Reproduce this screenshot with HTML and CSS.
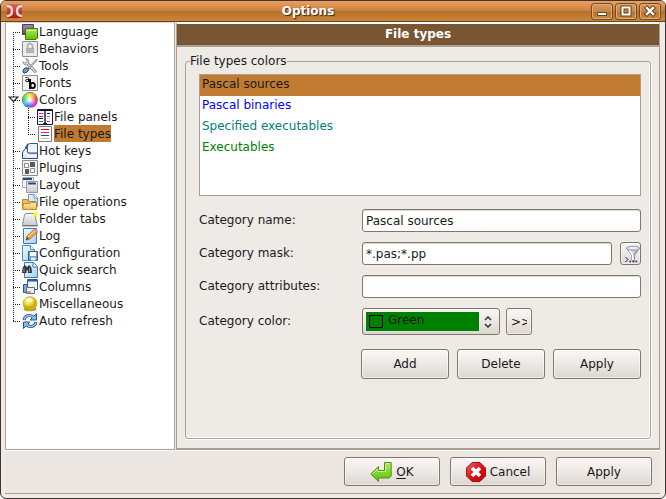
FILE: index.html
```html
<!DOCTYPE html>
<html lang="en">
<head>
<meta charset="utf-8">
<title>Options</title>
<link rel="stylesheet" href="styles.css">
</head>
<body>
<svg class="defs" aria-hidden="true">
  <defs>
    <linearGradient id="green" x2="0" y2="1"><stop stop-color="#b0ec5c"/><stop offset="1" stop-color="#5fbc06"/></linearGradient>
    <linearGradient id="lilac" x2="0" y2="1"><stop stop-color="#a58aae"/><stop offset="1" stop-color="#64466c"/></linearGradient>
    <linearGradient id="paper" x2="1" y2="1"><stop stop-color="#f4faff"/><stop offset="1" stop-color="#a6cdf5"/></linearGradient>
    <linearGradient id="steel" x2="0" y2="1"><stop stop-color="#f7f7f8"/><stop offset="1" stop-color="#c7c8cc"/></linearGradient>
    <linearGradient id="folder" x2="0" y2="1"><stop stop-color="#fff0b4"/><stop offset="1" stop-color="#eeb64c"/></linearGradient>
    <radialGradient id="gold" cx=".4" cy=".3"><stop stop-color="#fffbb0"/><stop offset=".6" stop-color="#eddb36"/><stop offset="1" stop-color="#c9b115"/></radialGradient>
    <linearGradient id="red" x2="1" y2="1"><stop stop-color="#e8686a"/><stop offset=".5" stop-color="#d41418"/><stop offset="1" stop-color="#c00000"/></linearGradient>
    <linearGradient id="brick" x2="0" y2="1"><stop stop-color="#d9695a"/><stop offset="1" stop-color="#b5120c"/></linearGradient>
  </defs>
</svg>
<div class="window">
  <header class="titlebar">
    <svg class="logo" width="17" height="14" viewBox="0 0 17 14"><rect x="1" width="15" height="14" rx="1" fill="url(#brick)"/><path d="M1 2C4.500 2 6 4 6 7S4.500 12 1 12M16 2C12.500 2 11 4 11 7s1.500 5 5 5" fill="none" stroke="#e3dcda" stroke-width="2.400"/></svg>
    <h1>Options</h1>
    <div class="controls">
      <button aria-label="Minimize"><svg width="14" height="14" viewBox="0 0 14 14"><path d="M2.500 8.500h9v3h-9z" fill="#fff" stroke="#6b4217"/></svg></button>
      <button aria-label="Maximize"><svg width="14" height="14" viewBox="0 0 14 14"><path d="M3.500 3.500h7v7h-7z" fill="none" stroke="#6b4217" stroke-width="4"/><path d="M3.500 3.500h7v7h-7z" fill="none" stroke="#fff" stroke-width="2"/></svg></button>
      <button aria-label="Close"><svg width="14" height="14" viewBox="0 0 14 14"><path d="M4 4l6 6m0-6l-6 6" stroke="#6b4217" stroke-width="4.400" stroke-linecap="square"/><path d="M4 4l6 6m0-6l-6 6" stroke="#fff" stroke-width="2.400" stroke-linecap="square"/></svg></button>
    </div>
  </header>
  <div class="frame">
    <main class="body">
      <nav class="sidebar">
        <ul class="tree">
          <li><a class="node" href="#"><svg class="icon" viewBox="0 0 16 16"><path d="M.5.500h11v10H.500z" fill="url(#lilac)" stroke="#553a5e"/><path d="M3.500 5.500l1.500-1h10.500v9.500l-1.500 1.500H3.500z" fill="url(#green)" stroke="#3d7d08"/><path d="M4.500 6.500h9" stroke="#d2f79c"/></svg><span>Language</span></a></li>
          <li><a class="node" href="#"><svg class="icon" viewBox="0 0 16 16"><path d="M.5.500h15v15H.500z" fill="#ececec" stroke="#8d8d8d"/><path d="M5.500 7V5a2.500 2.500 0 0 1 5 0v2" fill="none" stroke="#a9a9a9" stroke-width="1.500"/><path d="M4 7h8v5H4z" fill="#aaa"/><path d="M4 8.500h8M4 10.500h8" stroke="#bcbcbc"/></svg><span>Behaviors</span></a></li>
          <li><a class="node" href="#"><svg class="icon" viewBox="0 0 16 16"><path d="M5 5l9 9.500" stroke="#777" stroke-width="3"/><path d="M5 5l9 9.500" stroke="#dcdcdc" stroke-width="1.500"/><path d="M1 3.500L2.500 5 5 4.500 5 2 3.500.800Q7 .500 7 4 6.500 7.500 3 6.800 1 6 1 3.500z" fill="#ddd" stroke="#888" stroke-width=".8"/><path d="M6 10l7.500-8L15 1l-.5 2L7 11z" fill="#ddd" stroke="#777" stroke-width=".8"/><path d="M.800 13.500Q1 10.500 4 9.500L7 11Q6 15 2 15.300z" fill="#6d94c2" stroke="#254a78"/></svg><span>Tools</span></a></li>
          <li><a class="node" href="#"><svg class="icon" viewBox="0 0 16 16"><path d="M.5.500h15v15H.500z" fill="#f3f3f3" stroke="#8d8d8d"/><path d="M3.500 2.500h2q1 0 1 1V7M6.500 4.600H5q-1.500 0-1.500 1T5 6.600h1.500" fill="none" stroke="#222"/><path d="M8 4v10" stroke="#000" stroke-width="2"/><ellipse cx="10.700" cy="10.500" rx="2.200" ry="2.600" fill="none" stroke="#000" stroke-width="1.800"/></svg><span>Fonts</span></a></li>
          <li>
            <a class="node expanded" href="#"><svg class="twisty" width="11" height="7" viewBox="0 0 11 7"><path d="M1 1h9L5.500 5.500z" fill="#fff" stroke="#222" stroke-width="1.200"/></svg><i class="wheel"></i><span>Colors</span></a>
            <ul class="branch">
              <li><a class="node" href="#"><svg class="icon" viewBox="0 0 16 16"><path d="M.5.500h15v15H.500z" fill="#fff" stroke="#14143c"/><path d="M0 1.500h16" stroke="#14143c"/><path d="M8 1v14" stroke="#14143c" stroke-width="1.400"/><path d="M6 15h4" stroke="#14143c" stroke-width="2"/><path d="M2 4.500h4" stroke="#f0f"/><path d="M2 7.500h4" stroke="red"/><path d="M2 9.500h4M10 4.500h3" stroke="#00f"/><path d="M2 12.500h4" stroke="#0a0"/><path d="M10 7.500h3" stroke="#0bd"/><path d="M10 9.500h3" stroke="#ee0"/><path d="M10 12.500h3" stroke="#f0f"/></svg><span>File panels</span></a></li>
              <li><a class="node selected" href="#" aria-current="page"><svg class="icon" viewBox="0 0 16 16"><path d="M1.500.500h13v15h-13z" fill="#fff" stroke="#777"/><path d="M4 3.500h8" stroke="red"/><path d="M4 6.500h8" stroke="#f0f"/><path d="M4 9.500h8" stroke="green"/><path d="M4 12.500h8" stroke="#bbb"/></svg><span>File types</span></a></li>
            </ul>
          </li>
          <li><a class="node" href="#"><svg class="icon" viewBox="0 0 16 16"><path d="M.5 15.500V9L3.500 5.500H6V10h9.500v5.500z" fill="#e2e6ec" stroke="#23508d"/><path d="M5.500 2.500Q6 .500 8 .500h7.500v9.500H7Q4.500 10 5.500 7z" fill="#f1f2f4" stroke="#345c92"/><path d="M3.500 5.500L6 .8" stroke="#2e5a96" stroke-width="1.600"/><path d="M1.500 10.500H5l1.500 2.500H14" fill="none" stroke="#fff" stroke-width="1.500"/></svg><span>Hot keys</span></a></li>
          <li><a class="node" href="#"><svg class="icon" viewBox="0 0 16 16"><path d="M.5.500h15v15H.500z" fill="#f2f2f2" stroke="#8d8d8d"/><path d="M2.500 3.500h4v4h-4zM8.500 8.500h4v4h-4z" fill="#fff" stroke="#888"/><path d="M8 2h5v5H8zM3 9h4v5H3z" fill="#555c5f"/></svg><span>Plugins</span></a></li>
          <li><a class="node" href="#"><svg class="icon" viewBox="0 0 16 16"><path d="M.5.500h11v10H.500z" fill="#f3f3f3" stroke="#aaa"/><path d="M1 2h9" stroke="#244b86" stroke-width="2"/><path d="M4.500 4.500h11v11h-11z" fill="url(#steel)" stroke="#999"/><path d="M6 6.500h8" stroke="#244b86" stroke-width="2"/></svg><span>Layout</span></a></li>
          <li><a class="node" href="#"><svg class="icon" viewBox="0 0 16 16"><path d="M6.500.500h6l3 3v9h-9z" fill="url(#paper)" stroke="#6798d1"/><path d="M12 .500v3.500h3.500" fill="#fff" stroke="#6798d1"/><path d="M.5 14.500V5.500h5l1 2h7v7z" fill="#eec064" stroke="#bd8527"/><path d="M.5 15.500l1-6H8l1.500-1h5v7z" fill="url(#folder)" stroke="#c58b2b"/></svg><span>File operations</span></a></li>
          <li><a class="node" href="#"><svg class="icon" viewBox="0 0 16 16"><path d="M.5 13.500L2.500 4l1-1.500h8L13 4l2 9.500v1.500H.500z" fill="url(#steel)" stroke="#888"/><path d="M0 14.500h16" stroke="#777"/><path d="M11 1l2 .8L14.500 0l.5 2 1 1.500-1 1 .5 2-2-1-2 .5.300-2z" fill="#fff51f"/></svg><span>Folder tabs</span></a></li>
          <li><a class="node" href="#"><svg class="icon" viewBox="0 0 16 16"><path d="M1.500.500h13v15h-13z" fill="url(#paper)" stroke="#3c78c4"/><path d="M4 12l1-4 7-6.500L15.500 4 8 11z" fill="#f3a93a" stroke="#8b641e" stroke-width=".7"/><path d="M6 8.500l7-6" stroke="#ffe4a0"/><path d="M12 1.500l1.500-1L16 3l-1 1.500z" fill="#e58d91"/><path d="M4 12l1-3 2 2z" fill="#444"/></svg><span>Log</span></a></li>
          <li><a class="node" href="#"><svg class="icon" viewBox="0 0 16 16"><path d="M.5.500h8l4 4v11H.500z" fill="url(#paper)" stroke="#4f88cc"/><path d="M8.500.500v4h4" fill="#fff" stroke="#4f88cc"/><path d="M6.500 6.500h9v9h-9z" fill="#719fd6" stroke="#315e9b"/><path d="M8 7h6v4H8z" fill="#fff"/><path d="M9 12.500h4.500v3H9z" fill="#e5edf6"/></svg><span>Configuration</span></a></li>
          <li><a class="node" href="#"><svg class="icon" viewBox="0 0 16 16"><path d="M2.500.500h9l4 4v11h-13z" fill="url(#paper)" stroke="#3c78c4"/><path d="M11 .500v4.500h4.500" fill="#fff" stroke="#3c78c4"/><path d="M0 11l.5-5L2 3.500h2l.5 1.500H5.500L6 3.500h2L9.500 6l.5 5H6V8.500H4.500V11z" fill="#303840"/><path d="M2 6v4m5.500-4v4" stroke="#89939b"/></svg><span>Quick search</span></a></li>
          <li><a class="node" href="#"><svg class="icon" viewBox="0 0 16 16"><path d="M5.500.500h10v10h-10z" fill="#edf3fb" stroke="#35568e"/><path d="M6 1.500h9" stroke="#315a9c" stroke-width="2"/><path d="M1.500 5.500h4v8h-4z" fill="#79a7dd" stroke="#28558e"/><path d="M4.500 8.500h8v6h-8z" fill="#eee" stroke="#6c6680"/><path d="M5 12h4v2H5z" fill="#c99"/></svg><span>Columns</span></a></li>
          <li><a class="node" href="#"><svg class="icon" viewBox="0 0 16 16"><ellipse cx="8" cy="13" rx="6.500" ry="2.300" fill="#b5a336"/><circle cx="8" cy="7.500" r="6.800" fill="url(#gold)" stroke="#b9a317" stroke-width=".8"/><ellipse cx="7" cy="4" rx="3.500" ry="2" fill="#fffde0" opacity=".8"/><path d="M3 10.500h10" stroke="#c4ad1f"/></svg><span>Miscellaneous</span></a></li>
          <li><a class="node" href="#"><svg class="icon" viewBox="0 0 16 16"><path d="M2 7Q3 2.500 7.500 2.500q2.500 0 4 2M14 9q-1 4.500-5.500 4.500-2.500 0-4-2" fill="none" stroke="#255892" stroke-width="3.200"/><path d="M14.500.500v6.500H8zM1.500 15.500V9H8z" fill="#8db8e5" stroke="#255892"/><path d="M2 6.500Q3.500 2.500 7.500 2.500q2.500 0 4.500 2.500M14 9.500q-1.500 4-5.500 4-2.500 0-4.500-2.500" fill="none" stroke="#9fc4ea" stroke-width="1.400"/></svg><span>Auto refresh</span></a></li>
        </ul>
      </nav>
      <section class="page">
        <h2>File types</h2>
        <fieldset class="group">
          <legend>File types colors</legend>
          <ul class="types" role="listbox" aria-label="File types colors">
            <li class="current" role="option" aria-selected="true">Pascal sources</li>
            <li class="blue" role="option">Pascal binaries</li>
            <li class="teal" role="option">Specified executables</li>
            <li class="green" role="option">Executables</li>
          </ul>
          <div class="form">
            <label for="name">Category name:</label>
            <input id="name" type="text" value="Pascal sources">
            <label for="mask">Category mask:</label>
            <div class="with-button">
              <input id="mask" type="text" value="*.pas;*.pp">
              <button class="push filter" aria-label="Choose mask"><svg width="18" height="20" viewBox="0 0 18 20"><path d="M4.500 4.500L9.500 11v5l3 1.500V11l5-6.500z" fill="#d3d6e2" stroke="#777b91" stroke-width=".7"/><ellipse cx="11" cy="4.200" rx="6.600" ry="2" fill="#e9ebf2" stroke="#777b91" stroke-width=".8"/><path d="M7.500 6.500l3 4.500v5" fill="none" stroke="#fff" stroke-width="1.300"/><path d="M14.500 6.500L12 11" stroke="#888da4"/><path d="M3.500 13l2.500 2.500L3.500 18" fill="none" stroke="#10106a"/><path d="M7.500 17.500H9m1.500 0H12m1.500 0H15" stroke="#10106a" stroke-width="1.400"/></svg></button>
            </div>
            <label for="attributes">Category attributes:</label>
            <input id="attributes" type="text">
          </div>
          <div class="form color-row">
            <label for="color">Category color:</label>
            <div class="color-tools">
              <div class="combo">
                <i class="swatch"></i>
                <select id="color"><option>Green</option><option>Blue</option><option>Teal</option></select>
                <svg width="8" height="12" viewBox="0 0 8 12"><path d="M1 4l3-3 3 3M1 8l3 3 3-3" fill="none" stroke="#333" stroke-width="1.500"/></svg>
              </div>
              <button class="push more" aria-label="More colors"><span>&gt;&gt;</span></button>
            </div>
          </div>
          <div class="actions">
            <button class="push">Add</button>
            <button class="push">Delete</button>
            <button class="push">Apply</button>
          </div>
        </fieldset>
      </section>
    </main>
    <footer class="footer">
      <button class="push"><svg width="22" height="20" viewBox="0 0 22 20"><path d="M.800 12L8.500 4.500V8.500h6v-8h6.700v13.500l-2 2H8.500v3.500z" fill="url(#green)" stroke="#4a9310"/><path d="M2.500 12l5-4.800v2.300h8v-8h4.500" fill="none" stroke="#c4f193"/></svg><span class="ok"><u>O</u>K</span></button>
      <button class="push"><svg width="20" height="20" viewBox="0 0 20 20"><path d="M6 .500h8L19.500 6v8L14 19.500H6L.5 14V6z" fill="url(#red)" stroke="#b00c10"/><path d="M6 6l8 8m0-8l-8 8" stroke="#fff" stroke-width="3.600"/></svg><span>Cancel</span></button>
      <button class="push">Apply</button>
    </footer>
  </div>
</div>
</body>
</html>
```
FILE: styles.css
```css
* { box-sizing: border-box; }

:root {
  --line: #ad9e92;
  --edge: #83776c;
  --accent: #c07a31;
  --panel: #eeebe7;
}

html, body { height: 100%; }

body {
  margin: 0;
  background: #fff;
  color: #1a1a1a;
  font: 12px/14px "DejaVu Sans", sans-serif;
}

ul { margin: 0; padding: 0; list-style: none; }
button, input, select { margin: 0; font: inherit; color: inherit; }
svg { display: block; flex: none; }
.defs { position: absolute; width: 0; height: 0; }

.window {
  display: flex;
  flex-direction: column;
  min-height: 100%;
  border: 1px solid #3b3431;
  border-radius: 6px;
  background: #efeae6;
  overflow: hidden;
}

.titlebar {
  display: grid;
  grid-template-columns: 20px 1fr 70px;
  align-items: center;
  height: 21px;
  padding: 0 4px;
  border-bottom: 1px solid #6f431b;
  background: linear-gradient(#e9a061, #d98d49 30%, #c98039 50%, #b5712d 52%, #cd8439);
}

.logo { margin-left: 1px; }

.titlebar h1 {
  margin: 0;
  color: #fff;
  font-size: 12px;
  line-height: 14px;
  text-align: center;
  text-shadow: 1px 1px 1px #3a210b;
}

.controls { display: flex; gap: 2px; }

.controls button {
  display: grid;
  place-items: center;
  width: 22px;
  height: 17px;
  padding: 0;
  border: 1px solid #75491d;
  border-radius: 3px;
  background: linear-gradient(#d89a63, #c48547 50%, #b57431 52%, #cb8944);
  box-shadow: inset 0 0 0 1px #e0ac7b;
}

.frame {
  flex: 1;
  display: flex;
  flex-direction: column;
  margin: 0 5px 4px 4px;
  border-bottom: 1px solid var(--line);
}

.body { flex: 1; display: flex; gap: 1px; }

.sidebar {
  flex: none;
  width: 170px;
  border: 1px solid var(--line);
  border-top-color: #ddd5cf;
  background: #fff;
}

.tree {
  background: repeating-linear-gradient(#222 0 1px, transparent 1px 2px) 7px 9px / 1px calc(100% - 17px) no-repeat;
}

.node {
  display: flex;
  align-items: center;
  gap: 1px;
  height: 17px;
  padding-left: 16px;
  color: inherit;
  text-decoration: none;
  white-space: nowrap;
  background: repeating-linear-gradient(to right, #222 0 1px, transparent 1px 2px) 7px 9px / 8px 1px no-repeat;
}

.node span { padding-top: 1px; line-height: 16px; }
.icon, .wheel { flex: none; width: 16px; height: 16px; }

.expanded { padding-left: 2px; }
.twisty { margin-right: 2px; }

.wheel {
  border: 1px solid rgba(80, 80, 80, .35);
  border-radius: 50%;
  background:
    radial-gradient(circle, #fff 5%, rgba(255, 255, 255, 0) 60%),
    conic-gradient(#f6e13a, #ff9a2a, #ff3a4a, #ff35c0, #a04cff, #3d7bff, #2fd6f2, #35e070, #9bea38, #f6e13a);
}

.branch {
  background: repeating-linear-gradient(#222 0 1px, transparent 1px 2px) 22px 0 / 1px 26px no-repeat;
}

.branch .node { padding-left: 31px; background-position: 22px 9px; }
.selected span { background: var(--accent); }

.page {
  flex: 1;
  display: flex;
  flex-direction: column;
  min-width: 0;
  border: 1px solid var(--line);
  border-top: 2px solid #fff;
  border-bottom-width: 2px;
  background: var(--panel);
}

.page h2 {
  margin: 0;
  border-bottom: 2px solid var(--line);
  background: #785533;
  color: #fff;
  font-size: 12px;
  line-height: 21px;
  text-align: center;
}

.group {
  flex: 1;
  min-width: 0;
  margin: 7px 8px 9px 8px;
  padding: 6px 9px 0 13px;
  border: 1px solid var(--line);
  border-radius: 3px;
  box-shadow: inset -1px -1px #fff, 1px 1px #fff;
}

.group legend { margin-left: -9px; padding: 0; }

.types {
  height: 122px;
  border: 1px solid var(--line);
  background: #fff;
}

.types li { height: 21px; padding-left: 2px; line-height: 19px; }
.types .current { background: var(--accent); }
.blue { color: #00f; }
.teal { color: #008080; }
.green { color: #008000; }

.form {
  display: grid;
  grid-template-columns: 163px 1fr;
  align-items: center;
  row-gap: 10px;
  margin-top: 13px;
}

.form label { line-height: 23px; }

.form input {
  width: 100%;
  min-width: 0;
  height: 23px;
  padding: 0 3px;
  border: 1px solid var(--edge);
  border-radius: 3px;
  background: #fff;
  box-shadow: inset 0 1px #ddd8d3;
  outline: 0;
}

.with-button { display: flex; gap: 8px; }

.push {
  display: flex;
  align-items: center;
  justify-content: center;
  padding: 0;
  border: 1px solid var(--edge);
  border-radius: 3px;
  background: linear-gradient(#faf8f7, #ece8e4 50%, #dcd6d0);
  box-shadow: inset 0 0 0 1px rgba(255, 255, 255, .5);
}

.filter { flex: none; width: 21px; height: 23px; }

.color-row { margin-top: 10px; }
.color-tools { display: flex; gap: 6px; }

.combo {
  position: relative;
  display: flex;
  align-items: center;
  gap: 5px;
  width: 138px;
  height: 27px;
  padding: 0 7px 0 3px;
  border: 1px solid var(--edge);
  border-radius: 3px;
  background: linear-gradient(#faf8f7, #ece8e4 50%, #dcd6d0);
}

.combo select {
  flex: 1;
  min-width: 0;
  height: 19px;
  padding: 0 0 3px 22px;
  border: 0;
  border-radius: 0;
  appearance: none;
  background: green;
  outline: 0;
}

.swatch {
  position: absolute;
  left: 6px;
  top: 6px;
  width: 14px;
  height: 13px;
  border: 1px solid #000;
  pointer-events: none;
}

.more { width: 26px; height: 27px; }
.more span { width: 16px; overflow: hidden; }

.actions {
  display: flex;
  justify-content: flex-end;
  gap: 8px;
  margin-top: 14px;
}

.actions .push { width: 88px; height: 30px; }

.footer {
  display: flex;
  justify-content: flex-end;
  gap: 10px;
  padding: 6px 8px 7px;
  border-top: 1px solid #fff;
  background: #ebe6e2;
}

.footer .push { gap: 4px; width: 96px; height: 29px; }
.footer u { text-underline-offset: 2px; }
```
